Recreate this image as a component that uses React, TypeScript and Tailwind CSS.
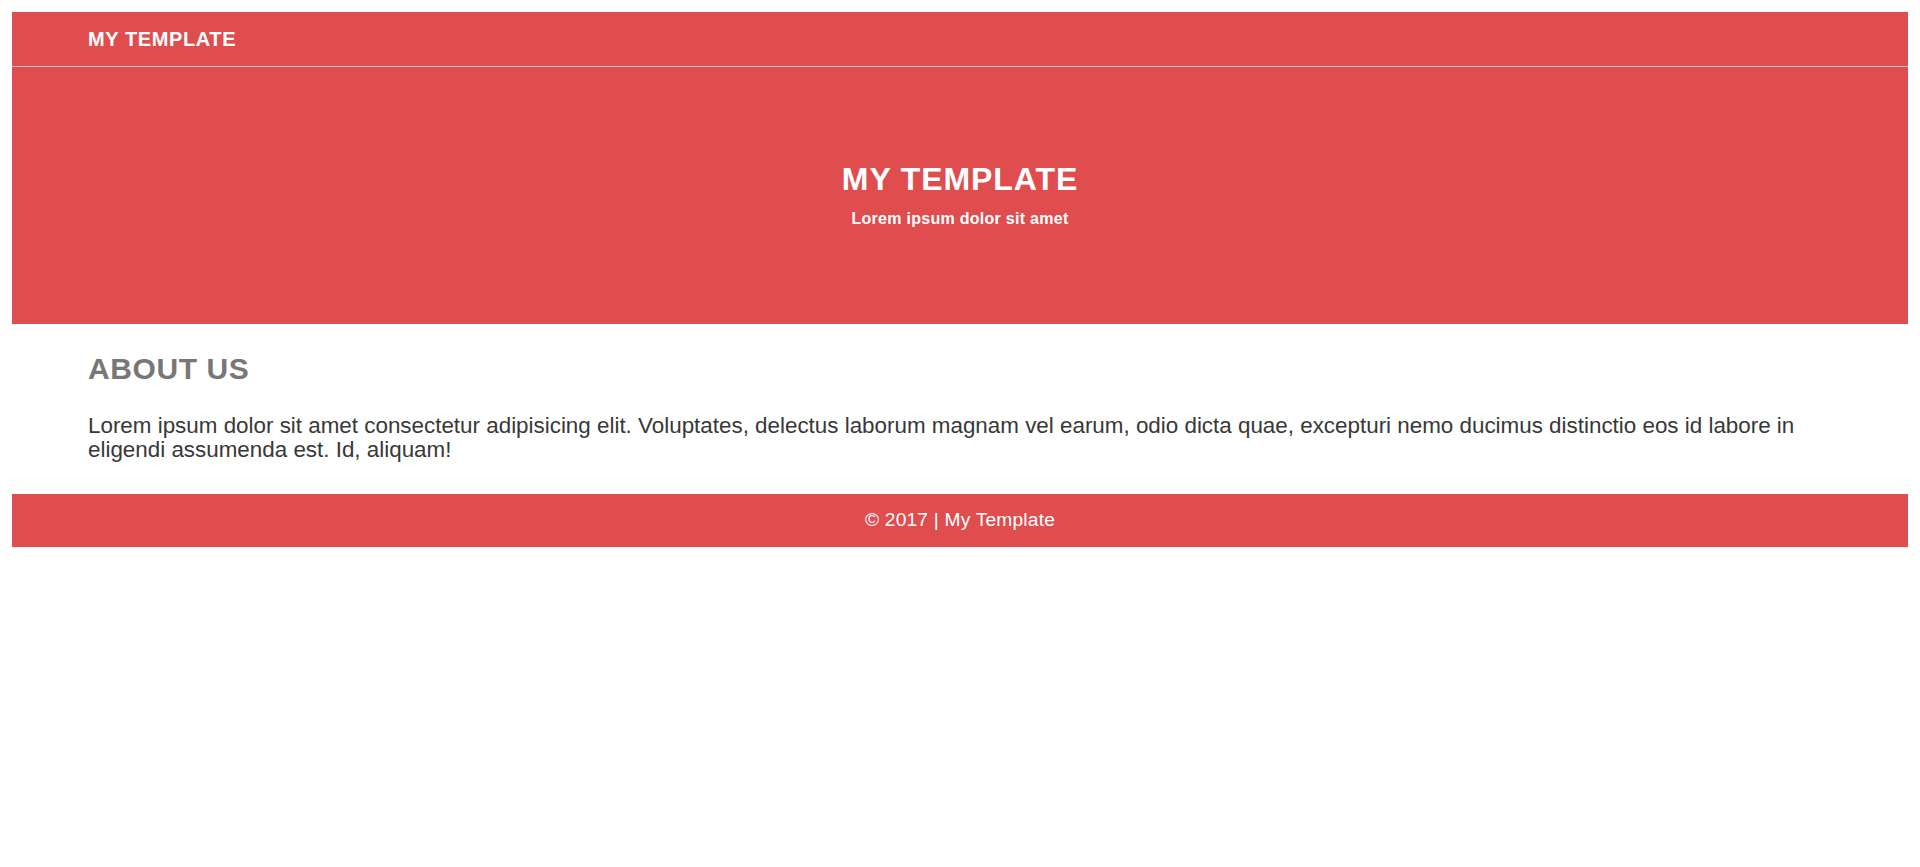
const RED = "bg-[#df4d4e]";

function Header() {
  return (
    <header className={`${RED} flex h-[55px] items-center border-b border-[#ecc4c4] px-[76px]`}>
      <span className="text-[20px] font-bold leading-none tracking-[0.6px] text-white">MY TEMPLATE</span>
    </header>
  );
}

function Hero() {
  return (
    <section className={`${RED} flex h-[257px] flex-col items-center justify-center pb-[2px] text-white`}>
      <h1 className="text-[32px] font-bold leading-[1.15] tracking-[0.9px]">MY TEMPLATE</h1>
      <p className="mt-[12px] text-[16px] font-bold leading-[1.15] tracking-[0.28px]">Lorem ipsum dolor sit amet</p>
    </section>
  );
}

function About() {
  return (
    <section className="px-[76px] pt-[28px] pb-[31px]">
      <h2 className="text-[30px] font-bold leading-[1.15] tracking-[0.6px] text-[#777777]">ABOUT US</h2>
      <p className="mt-[27px] text-[22.4px] leading-[1.1] text-[#383838]">
        Lorem ipsum dolor sit amet consectetur adipisicing elit. Voluptates, delectus laborum magnam vel earum,
        odio dicta quae, excepturi nemo ducimus distinctio eos id labore in eligendi assumenda est. Id, aliquam!
      </p>
    </section>
  );
}

function Footer() {
  return (
    <footer className={`${RED} flex h-[53px] items-center justify-center`}>
      <span className="text-[19.2px] leading-[1.15] tracking-[0.2px] text-white">© 2017 | My Template</span>
    </footer>
  );
}

export default function App() {
  return (
    <div className="min-h-screen bg-white p-3 font-['Liberation_Sans',Arial,sans-serif]">
      <Header />
      <Hero />
      <About />
      <Footer />
    </div>
  );
}
